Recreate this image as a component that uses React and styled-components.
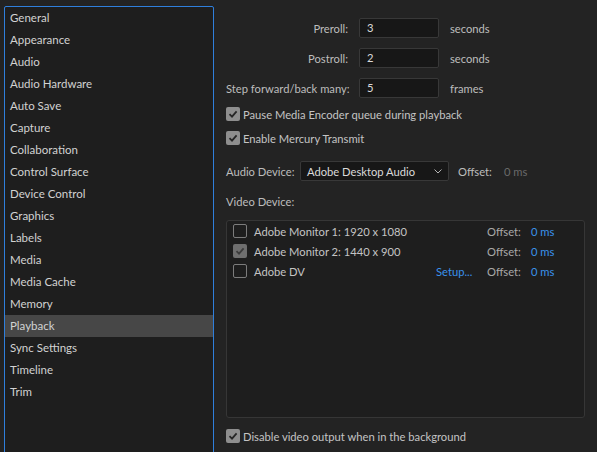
import React from 'react'
import styled, { createGlobalStyle } from 'styled-components'

const GlobalStyle = createGlobalStyle`
    html, body {
        margin: 0;
        padding: 0;
        background-color: #232323;
    }
    body {
        font-family: Lato, "Open Sans", sans-serif;
        font-size: 11.2px;
        color: #c4c4c4;
        overflow: hidden;
        white-space: nowrap;
    }
`

const categories = [
    'General', 'Appearance', 'Audio', 'Audio Hardware', 'Auto Save', 'Capture',
    'Collaboration', 'Control Surface', 'Device Control', 'Graphics', 'Labels',
    'Media', 'Media Cache', 'Memory', 'Playback', 'Sync Settings', 'Timeline', 'Trim',
]

const devices = [
    { name: 'Adobe Monitor 1: 1920 x 1080', checked: false },
    { name: 'Adobe Monitor 2: 1440 x 900', checked: true },
    { name: 'Adobe DV', checked: false, setup: true },
]

const Check = ({ checked, dim }) => (
    <Box $checked={checked} $dim={dim}>
        {checked &&
            <svg width="10" height="10" viewBox="0 0 10 10">
                <path d="M1.5 5.2 L4 7.6 L8.6 2.4" fill="none" stroke={dim ? '#3c3c3c' : '#262626'} strokeWidth="1.8" />
            </svg>
        }
    </Box>
)

const App = () => {
    return (
        <>
            <GlobalStyle />
            <Window>
                <Sidebar>
                    {categories.map((c) => (
                        <Category key={c} $active={c === 'Playback'}>{c}</Category>
                    ))}
                </Sidebar>
                <Panel>
                    <FieldGrid>
                        <Label>Preroll:</Label>
                        <Input>3</Input>
                        <Unit>seconds</Unit>
                        <Label>Postroll:</Label>
                        <Input>2</Input>
                        <Unit>seconds</Unit>
                        <Label>Step forward/back many:</Label>
                        <Input>5</Input>
                        <Unit>frames</Unit>
                    </FieldGrid>

                    <CheckRow $top={6}>
                        <Check checked />
                        <span>Pause Media Encoder queue during playback</span>
                    </CheckRow>
                    <CheckRow $top={4}>
                        <Check checked />
                        <span>Enable Mercury Transmit</span>
                    </CheckRow>

                    <AudioRow>
                        <AudioLabel>Audio Device:</AudioLabel>
                        <Select>
                            <span>Adobe Desktop Audio</span>
                            <svg width="8" height="5" viewBox="0 0 8 5">
                                <path d="M0.5 0.5 L4 4 L7.5 0.5" fill="none" stroke="#b4b4b4" strokeWidth="1" />
                            </svg>
                        </Select>
                        <span>Offset:</span>
                        <Muted>0 ms</Muted>
                    </AudioRow>

                    <SectionLabel>Video Device:</SectionLabel>

                    <DeviceList>
                        {devices.map((d) => (
                            <DeviceRow key={d.name}>
                                <Check checked={d.checked} dim />
                                <DeviceName>{d.name}</DeviceName>
                                <LinkText>{d.setup ? 'Setup...' : ''}</LinkText>
                                <OffsetLabel>Offset:</OffsetLabel>
                                <LinkText>0 ms</LinkText>
                            </DeviceRow>
                        ))}
                    </DeviceList>

                    <CheckRow $top={8}>
                        <Check checked />
                        <span>Disable video output when in the background</span>
                    </CheckRow>
                </Panel>
            </Window>
        </>
    )
}

export default App

const Window = styled.div`
    display: flex;
    height: 452px;
    overflow: hidden;
`
const Sidebar = styled.div`
    margin: 6px 0 0 4px;
    width: 208px;
    height: 470px;
    flex-shrink: 0;
    border: 1px solid #2f7fdc;
    border-radius: 2px;
    background-color: #1e1e1e;
    font-size: 11.5px;
`
const Category = styled.div`
    height: 22px;
    line-height: 22px;
    padding-left: 5px;
    color: #d2d2d2;
    background-color: ${props => props.$active ? '#474747' : 'transparent'};
`
const Panel = styled.div`
    flex: 1;
    padding: 18px 12px 0 12px;
    display: flex;
    flex-direction: column;
`
const FieldGrid = styled.div`
    display: grid;
    grid-template-columns: 122px 80px auto;
    column-gap: 11px;
    row-gap: 10px;
    align-items: center;
`
const Label = styled.span`
    text-align: right;
    color: #bdbdbd;
`
const Input = styled.div`
    height: 18px;
    line-height: 18px;
    padding: 0 7px;
    background-color: #171717;
    border: 1px solid #383838;
    border-radius: 2px;
    color: #dadada;
`
const Unit = styled.span`
    color: #bdbdbd;
`
const CheckRow = styled.div`
    display: flex;
    align-items: center;
    gap: 3px;
    height: 20px;
    margin-top: ${props => props.$top}px;
    color: #c4c4c4;
`
const Box = styled.div`
    width: 14px;
    height: 14px;
    box-sizing: border-box;
    border-radius: 2px;
    display: flex;
    align-items: center;
    justify-content: center;
    flex-shrink: 0;
    background-color: ${props => props.$checked ? (props.$dim ? '#6f6f6f' : '#8e8e8e') : 'transparent'};
    border: ${props => props.$checked ? 'none' : '1.5px solid #7c7c7c'};
`
const AudioRow = styled.div`
    display: flex;
    align-items: center;
    height: 20px;
    margin-top: 13px;
    color: #bdbdbd;
`
const AudioLabel = styled.span`
    width: 74px;
`
const Select = styled.div`
    width: 147px;
    height: 18px;
    display: flex;
    align-items: center;
    justify-content: space-between;
    background-color: #171717;
    border: 1px solid #383838;
    border-radius: 2px;
    margin-right: 9px;
    color: #dadada;

    & > span {
        padding-left: 6px;
    }
    & > svg {
        margin-right: 6px;
    }
`
const Muted = styled.span`
    margin-left: 12px;
    color: #6a6a6a;
`
const SectionLabel = styled.div`
    height: 20px;
    line-height: 20px;
    margin-top: 11px;
    color: #bdbdbd;
`
const DeviceList = styled.div`
    margin-top: 8px;
    width: 359px;
    height: 198px;
    box-sizing: border-box;
    border: 1px solid #363636;
    border-radius: 3px;
    background-color: #1e1e1e;
    padding-left: 6px;
`
const DeviceRow = styled.div`
    display: grid;
    grid-template-columns: 21px 182px 51px 44px auto;
    align-items: center;
    height: 20px;
`
const DeviceName = styled.span`
    color: #c4c4c4;
`
const OffsetLabel = styled.span`
    color: #a9a9a9;
`
const LinkText = styled.span`
    color: #3a92ec;
`
